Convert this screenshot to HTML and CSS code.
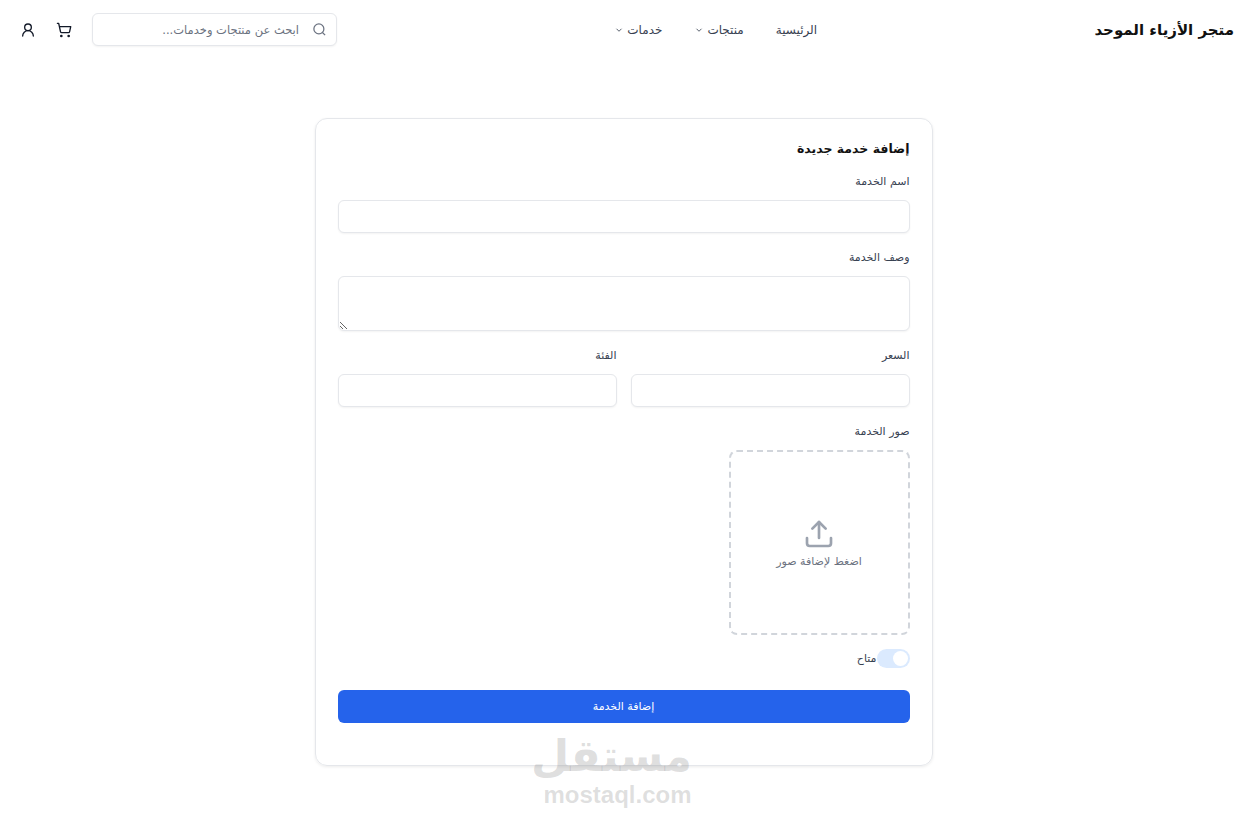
FILE: index.html
```html
<!DOCTYPE html>
<html lang="ar" dir="rtl">
<head>
  <meta charset="UTF-8" />
  <title>إضافة خدمة جديدة</title>
  <link rel="stylesheet" href="styles.css">
</head>
<body>

  <header class="top-bar">
    <div class="logo">متجر الأزياء الموحد</div>

    <nav class="main-nav">
      <a href="#">الرئيسية</a>
      <a href="#">منتجات
        <svg class="chevron" viewBox="0 0 24 24"><path d="m6 9 6 6 6-6"/></svg>
      </a>
      <a href="#">خدمات
        <svg class="chevron" viewBox="0 0 24 24"><path d="m6 9 6 6 6-6"/></svg>
      </a>
    </nav>

    <div class="tools">
      <div class="search-box">
        <svg class="search-icon" viewBox="0 0 24 24"><circle cx="11" cy="11" r="8"/><path d="m21 21-4.3-4.3"/></svg>
        <input type="text" placeholder="ابحث عن منتجات وخدمات..." />
      </div>
      <svg class="tool-icon" viewBox="0 0 24 24"><circle cx="8" cy="21" r="1"/><circle cx="19" cy="21" r="1"/><path d="M2.05 2.05h2l2.66 12.42a2 2 0 0 0 2 1.58h9.78a2 2 0 0 0 1.95-1.57l1.65-7.43H5.12"/></svg>
      <svg class="tool-icon" viewBox="0 0 24 24"><circle cx="12" cy="8" r="5"/><path d="M20 21a8 8 0 0 0-16 0"/></svg>
    </div>
  </header>

  <main class="page">
    <form class="card">
      <h2>إضافة خدمة جديدة</h2>

      <div class="field">
        <label>اسم الخدمة</label>
        <input type="text" />
      </div>

      <div class="field">
        <label>وصف الخدمة</label>
        <textarea></textarea>
      </div>

      <div class="field-row">
        <div class="field">
          <label>السعر</label>
          <input type="text" />
        </div>
        <div class="field">
          <label>الفئة</label>
          <input type="text" />
        </div>
      </div>

      <div class="field">
        <label>صور الخدمة</label>
        <div class="upload-box">
          <svg class="upload-icon" viewBox="0 0 24 24"><path d="M21 15v4a2 2 0 0 1-2 2H5a2 2 0 0 1-2-2v-4"/><polyline points="17 8 12 3 7 8"/><line x1="12" y1="3" x2="12" y2="15"/></svg>
          <span>اضغط لإضافة صور</span>
        </div>
      </div>

      <div class="toggle-row">
        <span class="toggle"><span class="thumb"></span></span>
        <span>متاح</span>
      </div>

      <button type="button" class="submit-btn">إضافة الخدمة</button>
    </form>
  </main>

  <div class="watermark">
    <div class="wm-arabic">مستقل</div>
    <div class="wm-latin">mostaql.com</div>
  </div>

</body>
</html>
```

FILE: styles.css
```css
* {
  box-sizing: border-box;
}

html, body {
  height: 822px;
  overflow: hidden;
}

body {
  margin: 0;
  background-color: white;
  font-family: "DejaVu Sans", "Liberation Sans", sans-serif;
  color: #111827;
  position: relative;
}

.top-bar {
  display: flex;
  justify-content: space-between;
  align-items: center;
  height: 59px;
  padding: 0 0 0 20px;
}

.logo {
  font-size: 15px;
  font-weight: bold;
  color: #111;
}

.main-nav {
  display: flex;
  align-items: center;
  gap: 32px;
}

.main-nav a {
  display: flex;
  align-items: center;
  gap: 3px;
  font-size: 12px;
  color: #374151;
  text-decoration: none;
}

.chevron {
  width: 10px;
  height: 10px;
  fill: none;
  stroke: #374151;
  stroke-width: 2;
}

.tools {
  display: flex;
  align-items: center;
  gap: 20px;
}

.search-box {
  position: relative;
  width: 245px;
  height: 33px;
}

.search-box input {
  width: 100%;
  height: 100%;
  padding: 0 37px 0 12px;
  font-family: inherit;
  font-size: 11.5px;
  border: 1px solid #e5e7eb;
  border-radius: 6px;
  box-shadow: 0 1px 2px rgba(0, 0, 0, 0.05);
}

.search-box input::placeholder {
  color: #6b7280;
}

.search-icon {
  position: absolute;
  right: 10px;
  top: 9px;
  width: 15px;
  height: 15px;
  fill: none;
  stroke: #6b7280;
  stroke-width: 2;
}

.tool-icon {
  width: 16px;
  height: 16px;
  fill: none;
  stroke: #111827;
  stroke-width: 2;
  stroke-linecap: round;
  stroke-linejoin: round;
}

.page {
  display: flex;
  justify-content: center;
  padding: 59px 0 0 13px;
}

.card {
  width: 618px;
  height: 648px;
  padding: 22px;
  border: 1px solid #e5e7eb;
  border-radius: 12px;
  box-shadow: 0 1px 3px rgba(0, 0, 0, 0.08);
}

h2 {
  margin: 0 0 19px;
  font-size: 12.5px;
  line-height: 15px;
  font-weight: bold;
  color: #111;
}

.field {
  display: flex;
  flex-direction: column;
  margin-bottom: 18px;
}

.field label {
  font-size: 11px;
  line-height: 14px;
  margin-bottom: 11px;
  color: #374151;
}

.field input,
.field textarea {
  display: block;
  width: 100%;
  height: 33px;
  border: 1px solid #e5e7eb;
  border-radius: 6px;
  box-shadow: 0 1px 2px rgba(0, 0, 0, 0.05);
  font-family: inherit;
}

.field textarea {
  height: 55px;
}

.field-row {
  display: flex;
  gap: 14px;
}

.field-row .field {
  flex: 1;
}

.upload-box {
  display: flex;
  flex-direction: column;
  align-items: center;
  justify-content: center;
  gap: 5px;
  width: 181px;
  height: 185px;
  border: 2px dashed #d1d5db;
  border-radius: 8px;
  font-size: 11px;
  color: #6b7280;
}

.upload-icon {
  width: 32px;
  height: 32px;
  fill: none;
  stroke: #9ca3af;
  stroke-width: 2;
  stroke-linecap: round;
  stroke-linejoin: round;
}

.toggle-row {
  display: flex;
  align-items: center;
  height: 19px;
  margin: -4px 0 22px;
  font-size: 11px;
  color: #374151;
}

.toggle {
  position: relative;
  width: 33px;
  height: 19px;
  border-radius: 10px;
  background-color: #dbeafe;
}

.thumb {
  position: absolute;
  right: 2px;
  top: 2px;
  width: 15px;
  height: 15px;
  border-radius: 50%;
  background-color: white;
}

.submit-btn {
  display: block;
  width: 100%;
  height: 33px;
  border: none;
  border-radius: 6px;
  background-color: #2563eb;
  color: white;
  font-family: inherit;
  font-size: 11px;
}

.watermark {
  position: absolute;
  left: 543px;
  top: 730px;
  width: 149px;
  text-align: center;
  color: rgba(110, 110, 110, 0.22);
  font-weight: bold;
  pointer-events: none;
}

.wm-arabic {
  font-size: 44px;
  line-height: 52px;
}

.wm-latin {
  font-family: "Liberation Sans", sans-serif;
  font-size: 24px;
  line-height: 26px;
}
```
